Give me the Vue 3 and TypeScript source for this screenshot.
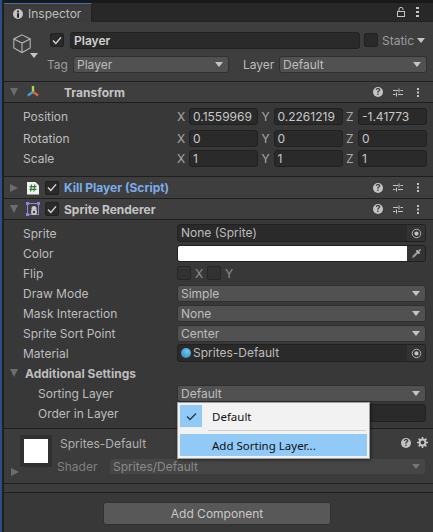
<script setup lang="ts">
interface Axis { name: string; value: string }
interface VecRow { label: string; axes: Axis[] }
interface PropRow { label: string; value: string; kind: 'object' | 'select' | 'color' | 'flip' | 'material' }

const transformRows: VecRow[] = [
  { label: 'Position', axes: [{ name: 'X', value: '0.1559969' }, { name: 'Y', value: '0.2261219' }, { name: 'Z', value: '-1.41773' }] },
  { label: 'Rotation', axes: [{ name: 'X', value: '0' }, { name: 'Y', value: '0' }, { name: 'Z', value: '0' }] },
  { label: 'Scale', axes: [{ name: 'X', value: '1' }, { name: 'Y', value: '1' }, { name: 'Z', value: '1' }] },
]

const spriteRows: PropRow[] = [
  { label: 'Sprite', value: 'None (Sprite)', kind: 'object' },
  { label: 'Color', value: '', kind: 'color' },
  { label: 'Flip', value: '', kind: 'flip' },
  { label: 'Draw Mode', value: 'Simple', kind: 'select' },
  { label: 'Mask Interaction', value: 'None', kind: 'select' },
  { label: 'Sprite Sort Point', value: 'Center', kind: 'select' },
  { label: 'Material', value: 'Sprites-Default', kind: 'material' },
]
</script>

<template>
  <div class="window">
    <div class="tabbar">
      <div class="tab">
        <svg width="10" height="10" viewBox="0 0 10 10"><circle cx="5" cy="5" r="5" fill="#c4c4c4" /><rect x="4" y="1.6" width="2" height="1.8" fill="#282828" /><rect x="4" y="4.2" width="2" height="4.4" fill="#282828" /></svg>
        <span>Inspector</span>
      </div>
      <div class="tabtools">
        <svg width="9" height="10" viewBox="0 0 9 10"><rect x="0.5" y="4.5" width="7" height="5" fill="none" stroke="#c4c4c4" /><path d="M2 4.5V2a2 1.6 0 0 1 4 0v1" fill="none" stroke="#c4c4c4" /></svg>
        <svg width="3" height="10" viewBox="0 0 3 10"><rect width="3" height="2" fill="#c4c4c4" /><rect y="4" width="3" height="2" fill="#c4c4c4" /><rect y="8" width="3" height="2" fill="#c4c4c4" /></svg>
      </div>
    </div>

    <div class="objhead">
      <div class="cube">
        <svg width="20" height="21" viewBox="0 0 22 22"><path d="M11 1.5 20 6v10l-9 5-9-5V6zM2 6l9 4.500L20 6M11 10.500V21" fill="none" stroke="#b4b4b4" stroke-width="1.2" /></svg>
        <i class="caret small"></i>
      </div>
      <div class="objcol">
        <div class="objrow">
          <span class="check on"><svg width="10" height="9" viewBox="0 0 10 9"><path d="M1 4.600 3.800 7.400 9 1.400" fill="none" stroke="#d8d8d8" stroke-width="1.4" /></svg></span>
          <div class="field name">Player</div>
          <span class="check"></span>
          <span class="static">Static</span>
          <i class="caret"></i>
        </div>
        <div class="tagrow">
          <span class="taglabel">Tag</span>
          <div class="select tag"><span>Player</span><i class="caret"></i></div>
          <span class="layerlabel">Layer</span>
          <div class="select layer"><span>Default</span><i class="caret"></i></div>
        </div>
      </div>
    </div>

    <div class="comphead thin">
      <i class="fold open"></i>
      <svg class="compicon" width="14" height="14" viewBox="0 0 14 14"><path d="M7 7V1" stroke="#a6d84a" stroke-width="2.4" /><path d="M7 7 1.800 10.400" stroke="#3fa2dc" stroke-width="2.4" /><path d="M7 7 12.200 10.400" stroke="#e2643c" stroke-width="2.4" /></svg>
      <span class="spacer-check"></span>
      <b class="title">Transform</b>
      <span class="headtools"><i class="help">?</i><svg width="10" height="9" viewBox="0 0 10 9"><path d="M0 2.500h5M7.500 2.500H10M0 6.500h2.500M5 6.500h5M6 0.500v4M3.500 4.500v4" stroke="#c4c4c4" /></svg><svg class="dots" width="2" height="9" viewBox="0 0 2 9"><path d="M0 0h2v2H0zM0 3.500h2v2H0zM0 7h2v2H0z" fill="#c4c4c4" /></svg></span>
    </div>
    <div class="transform">
      <div v-for="row in transformRows" :key="row.label" class="vecrow">
        <span class="label">{{ row.label }}</span>
        <div class="axes">
          <div v-for="axis in row.axes" :key="axis.name" class="axis">
            <span class="axisname">{{ axis.name }}</span>
            <div class="field num">{{ axis.value }}</div>
          </div>
        </div>
      </div>
    </div>

    <div class="comphead">
      <i class="fold"></i>
      <svg class="compicon" width="12" height="14" viewBox="0 0 12 14"><path d="M0 1h8.500L12 4.500V13.500H0z" fill="#f0f0f0" /><path d="M4.600 3.500 3.600 10.500M7.800 3.500 6.800 10.500M2.500 5.600H9.500M2.500 8.400H9.500" stroke="#2e7d32" stroke-width="1.2" /></svg>
      <span class="check on small"><svg width="10" height="9" viewBox="0 0 10 9"><path d="M1 4.600 3.800 7.400 9 1.400" fill="none" stroke="#d8d8d8" stroke-width="1.4" /></svg></span>
      <b class="title link">Kill Player (Script)</b>
      <span class="headtools"><i class="help">?</i><svg width="10" height="9" viewBox="0 0 10 9"><path d="M0 2.500h5M7.500 2.500H10M0 6.500h2.500M5 6.500h5M6 0.500v4M3.500 4.500v4" stroke="#c4c4c4" /></svg><svg class="dots" width="2" height="9" viewBox="0 0 2 9"><path d="M0 0h2v2H0zM0 3.500h2v2H0zM0 7h2v2H0z" fill="#c4c4c4" /></svg></span>
    </div>
    <div class="comphead thin">
      <i class="fold open"></i>
      <svg class="compicon" width="14" height="14" viewBox="0 0 14 14"><rect x="1.500" y="1.500" width="11" height="11" fill="none" stroke="#9a7be0" /><path d="M0 0h3v3H0zM11 0h3v3h-3zM0 11h3v3H0z" fill="#9a7be0" /><circle cx="8" cy="6.500" r="2.500" fill="#c8c8c8" /><circle cx="8" cy="10" r="3" fill="#c8c8c8" /><circle cx="8" cy="10" r="1.200" fill="#3c3c3c" /></svg>
      <span class="check on small"><svg width="10" height="9" viewBox="0 0 10 9"><path d="M1 4.600 3.800 7.400 9 1.400" fill="none" stroke="#d8d8d8" stroke-width="1.4" /></svg></span>
      <b class="title">Sprite Renderer</b>
      <span class="headtools"><i class="help">?</i><svg width="10" height="9" viewBox="0 0 10 9"><path d="M0 2.500h5M7.500 2.500H10M0 6.500h2.500M5 6.500h5M6 0.500v4M3.500 4.500v4" stroke="#c4c4c4" /></svg><svg class="dots" width="2" height="9" viewBox="0 0 2 9"><path d="M0 0h2v2H0zM0 3.500h2v2H0zM0 7h2v2H0z" fill="#c4c4c4" /></svg></span>
    </div>

    <div class="props">
      <div v-for="row in spriteRows" :key="row.label" class="proprow">
        <span class="label">{{ row.label }}</span>
        <div v-if="row.kind === 'select'" class="select wide"><span>{{ row.value }}</span><i class="caret"></i></div>
        <div v-else-if="row.kind === 'object'" class="field wide object"><span>{{ row.value }}</span><em class="picker"><u></u></em></div>
        <div v-else-if="row.kind === 'material'" class="field wide object"><span class="mat"><i class="ball"></i>{{ row.value }}</span><em class="picker"><u></u></em></div>
        <div v-else-if="row.kind === 'color'" class="colorfield">
          <div class="swatch"></div>
          <em class="dropper"><svg width="11" height="11" viewBox="0 0 11 11"><path d="M1 10 2 7.500 6.500 3 8 4.500 3.500 9z" fill="#9a9a9a" /><path d="M6 1.800 7.200 3l1.800-2 1 1-2 1.800L9.200 5 8 6.200 4.800 3z" fill="#b8b8b8" /></svg></em>
        </div>
        <div v-else class="flip">
          <span class="check"></span><span class="flipname">X</span><span class="check"></span><span class="flipname">Y</span>
        </div>
      </div>
      <div class="subhead"><i class="fold open"></i><b>Additional Settings</b></div>
      <div class="proprow nested">
        <span class="label">Sorting Layer</span>
        <div class="select wide"><span>Default</span><i class="caret"></i></div>
      </div>
      <div class="proprow nested">
        <span class="label">Order in Layer</span>
        <div class="field wide"></div>
      </div>
    </div>

    <div class="material">
      <div class="preview"><div class="white"></div></div>
      <i class="fold dim"></i>
      <div class="matinfo">
        <span class="matname">Sprites-Default</span>
        <div class="shader">
          <span class="shaderlabel">Shader</span>
          <div class="select shaderselect"><span>Sprites/Default</span><i class="caret"></i></div>
        </div>
      </div>
      <span class="mattools">
        <i class="help">?</i>
        <svg width="11" height="11" viewBox="0 0 11 11"><circle cx="5.500" cy="5.500" r="2.900" fill="none" stroke="#c4c4c4" stroke-width="2" /><path d="M5.500 0v11M0 5.500h11M1.600 1.600l7.800 7.800M9.400 1.600 1.600 9.400" stroke="#c4c4c4" stroke-width="1.6" stroke-dasharray="2 7 2" /></svg>
      </span>
    </div>
    <div class="gap"></div>
    <div class="footer"><button class="addbtn">Add Component</button></div>

    <div class="menu">
      <div class="menuitem"><span class="tick"><svg width="11" height="9" viewBox="0 0 11 9"><path d="M1 4.500 4 7.500 10 1.500" fill="none" stroke="#1d3a52" stroke-width="1.3" /></svg></span><span class="menutext">Default</span></div>
      <div class="menusep"></div>
      <div class="menuitem active"><span class="tick blank"></span><span class="menutext">Add Sorting Layer...</span></div>
    </div>
  </div>
</template>

<style scoped>
.window {
  position: relative;
  width: 433px;
  height: 532px;
  box-sizing: border-box;
  overflow: hidden;
  display: flex;
  flex-direction: column;
  padding-left: 2px;
  background: #202020;
  border-left: 2px solid #2c4d86;
  font-family: Inter, "Noto Sans", sans-serif;
  font-size: 12px;
  color: #bdbdbd;
}
.tabbar {
  height: 22px;
  flex: none;
  display: flex;
  justify-content: space-between;
  box-sizing: border-box;
  background: #282828;
  border-top: 3px solid #191919;
  border-bottom: 1px solid #232323;
}
.tab {
  width: 88px;
  height: 19px;
  box-sizing: border-box;
  display: flex;
  align-items: center;
  gap: 5px;
  padding: 1px 0 0 9px;
  background: #3c3c3c;
  border-top: 1px solid #3a72b0;
  border-right: 1px solid #232323;
}
.tabtools {
  display: flex;
  align-items: center;
  gap: 10px;
  padding-right: 14px;
}
.objhead {
  height: 60px;
  flex: none;
  box-sizing: border-box;
  display: flex;
  background: #3e3e3e;
  border-bottom: 1px solid #1f1f1f;
}
.cube {
  position: relative;
  width: 46px;
  padding: 11px 0 0 8px;
  box-sizing: border-box;
}
.cube .small {
  position: absolute;
  left: 26px;
  top: 31px;
}
.objcol {
  flex: 1;
  min-width: 0;
  padding-top: 9px;
}
.objrow {
  display: flex;
  align-items: center;
  height: 18px;
}
.check {
  flex: none;
  width: 14px;
  height: 14px;
  box-sizing: border-box;
  display: flex;
  align-items: center;
  justify-content: center;
  background: #2a2a2a;
  border: 1px solid #212121;
  border-radius: 2px;
}
.field {
  box-sizing: border-box;
  height: 18px;
  background: #2a2a2a;
  border: 1px solid #212121;
  border-radius: 3px;
  line-height: 16px;
  padding-left: 3px;
}
.name {
  width: 290px;
  margin-left: 6px;
  font-weight: 600;
  height: 17px;
  line-height: 15px;
  color: #d0d0d0;
}
.objrow .field + .check {
  margin-left: 4px;
}
.static {
  margin-left: 4px;
  color: #9c9c9c;
}
.objrow .caret {
  margin-left: 3px;
}
.caret {
  flex: none;
  display: inline-block;
  width: 0;
  height: 0;
  border-left: 4px solid transparent;
  border-right: 4px solid transparent;
  border-top: 5px solid #c4c4c4;
}
.tagrow {
  display: flex;
  align-items: center;
  margin: 6px 0 0 -3px;
  height: 18px;
}
.taglabel {
  width: 26px;
  color: #9c9c9c;
}
.select {
  box-sizing: border-box;
  height: 17px;
  display: flex;
  align-items: center;
  justify-content: space-between;
  padding: 0 5px 0 3px;
  background: #515151;
  border: 1px solid #303030;
  border-radius: 3px;
}
.tag {
  width: 156px;
}
.layerlabel {
  margin-left: 14px;
  width: 36px;
}
.layer {
  width: 148px;
}
.comphead {
  height: 22px;
  flex: none;
  box-sizing: border-box;
  display: flex;
  align-items: center;
  background: #3e3e3e;
  border-bottom: 1px solid #1f1f1f;
}
.comphead.thin {
  height: 21px;
}
.fold {
  flex: none;
  margin-left: 6px;
  width: 0;
  height: 0;
  border-left: 4px solid transparent;
  border-right: 4px solid transparent;
  border-top: 8px solid #6c6c6c;
}
.fold:not(.open) {
  border-top: 4px solid transparent;
  border-bottom: 4px solid transparent;
  border-left: 8px solid #6c6c6c;
  border-right: 0;
}
.compicon {
  margin-left: 8px;
  flex: none;
  width: 14px;
}
.spacer-check {
  width: 19px;
}
.check.small {
  margin-left: 5px;
}
.title {
  margin-left: 5px;
  font-weight: 700;
  color: #c4c4c4;
}
.link {
  color: #7bacec;
}
.headtools {
  margin-left: auto;
  display: flex;
  align-items: center;
  gap: 10px;
  padding-right: 14px;
}
.dots {
  margin-left: 4px;
}
.help {
  width: 10px;
  height: 10px;
  display: block;
  border-radius: 50%;
  background: #c4c4c4;
  color: #3c3c3c;
  font-size: 9px;
  font-weight: 700;
  font-style: normal;
  line-height: 10px;
  text-align: center;
}
.transform {
  height: 74px;
  flex: none;
  box-sizing: border-box;
  padding-top: 3px;
  background: #383838;
  border-bottom: 1px solid #1f1f1f;
}
.vecrow {
  display: flex;
  align-items: center;
  height: 20px;
  padding-left: 19px;
}
.vecrow:first-child {
  margin-bottom: 2px;
}
.label {
  flex: none;
  width: 154px;
}
.axes {
  display: flex;
  gap: 3.5px;
}
.axis {
  display: flex;
  align-items: center;
  width: 81px;
}
.axisname {
  width: 12px;
  flex: none;
  color: #a8a8a8;
}
.num {
  width: 69px;
  height: 17px;
  line-height: 15px;
  color: #c8c8c8;
}
.props {
  flex: none;
  height: 209px;
  box-sizing: border-box;
  padding-top: 3px;
  background: #383838;
  border-bottom: 1px solid #1f1f1f;
}
.proprow {
  display: flex;
  align-items: center;
  height: 20px;
  padding-left: 19px;
}
.proprow.nested {
  padding-left: 34px;
}
.proprow.nested .label {
  width: 139px;
}
.wide {
  width: 249px;
}
.object {
  display: flex;
  align-items: center;
  justify-content: space-between;
  overflow: hidden;
}
.picker {
  width: 18px;
  height: 16px;
  background: #333333;
  display: flex;
  align-items: center;
  justify-content: center;
}
.picker u {
  width: 5px;
  height: 5px;
  border-radius: 50%;
  background: #c4c4c4;
  border: 2px solid #333333;
  outline: 1px solid #c4c4c4;
  transform: scale(0.85);
}
.mat {
  display: flex;
  align-items: center;
  gap: 2px;
}
.ball {
  width: 10px;
  height: 10px;
  border-radius: 50%;
  background: radial-gradient(circle at 60% 35%, #6fc8f2, #2a7fb0);
}
.colorfield {
  width: 249px;
  height: 17px;
  box-sizing: border-box;
  display: flex;
  background: #333333;
  border: 1px solid #212121;
  border-radius: 3px;
  overflow: hidden;
}
.swatch {
  flex: 1;
  background: #ffffff;
}
.dropper {
  width: 18px;
  display: flex;
  align-items: center;
  justify-content: center;
}
.flip {
  display: flex;
  align-items: center;
}
.flip .check {
  background: #323232;
  border-color: #262626;
}
.flipname {
  width: 16px;
  padding-left: 4px;
  box-sizing: border-box;
  color: #8f8f8f;
}
.subhead {
  display: flex;
  align-items: center;
  height: 20px;
}
.subhead b {
  margin-left: 7px;
  font-weight: 700;
}
.material {
  position: relative;
  flex: none;
  height: 55px;
  box-sizing: border-box;
  background: #3c3c3c;
  border-bottom: 1px solid #1f1f1f;
}
.preview {
  position: absolute;
  left: 16px;
  top: 6px;
  width: 32px;
  height: 32px;
  box-sizing: border-box;
  padding: 4px;
  background: #303030;
}
.white {
  width: 24px;
  height: 24px;
  background: #ffffff;
}
.material .fold {
  position: absolute;
  left: 7px;
  top: 39px;
  margin: 0;
}
.matinfo {
  position: absolute;
  left: 53px;
  top: 7px;
}
.matname {
  display: block;
  margin-left: 3px;
  color: #b0b0b0;
}
.shader {
  display: flex;
  align-items: center;
  margin-top: 7px;
}
.shaderlabel {
  width: 52px;
  color: #808080;
}
.shaderselect {
  width: 317px;
  background: #464646;
  border-color: #3c3c3c;
  color: #8a8a8a;
}
.shaderselect .caret {
  border-top-color: #767676;
}
.mattools {
  position: absolute;
  right: 5px;
  top: 8px;
  display: flex;
  align-items: center;
  gap: 6px;
}
.gap {
  flex: none;
  height: 9px;
  box-sizing: border-box;
  background: #3c3c3c;
  border-bottom: 1px solid #1f1f1f;
}
.footer {
  flex: 1;
  display: flex;
  justify-content: center;
  padding: 9px 3px 0 0;
  background: #383838;
}
.addbtn {
  width: 228px;
  height: 23px;
  padding: 0;
  background: #585858;
  border: 1px solid #303030;
  border-radius: 3px;
  font: inherit;
  color: #c8c8c8;
}
.menu {
  position: absolute;
  left: 175px;
  top: 402px;
  width: 193px;
  height: 57px;
  box-sizing: border-box;
  padding: 2px;
  background: #f2f2f2;
  border: 1px solid #a0a0a0;
  box-shadow: 1px 1px 3px rgba(0, 0, 0, 0.5);
  font-family: "Noto Sans", "Open Sans", sans-serif;
  font-size: 11.5px;
  color: #111111;
}
.menuitem {
  display: flex;
  align-items: center;
  height: 22px;
}
.menuitem.active {
  background: #91c9f7;
}
.tick {
  width: 22px;
  height: 22px;
  flex: none;
  display: flex;
  align-items: center;
  justify-content: center;
  background: #91c9f7;
}
.tick.blank {
  background: none;
}
.menutext {
  margin-left: 10px;
}
.menusep {
  height: 1px;
  margin: 3px 1px 3px 28px;
  background: #d0d0d0;
}
</style>
